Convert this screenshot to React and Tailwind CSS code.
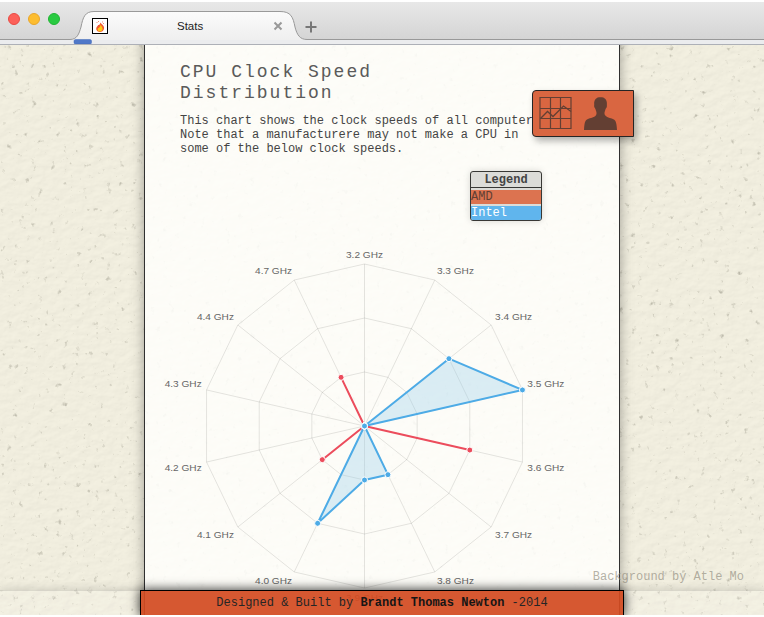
import React from "react";

const LABELS = ["3.2", "3.3", "3.4", "3.5", "3.6", "3.7", "3.8", "3.9", "4.0", "4.1", "4.2", "4.3", "4.4", "4.7"];
const AMD = [0, 0, 0, 0, 2, 0, 0, 0, 0, 1, 0, 0, 0, 1];
const INTEL = [0, 0, 2, 3, 0, 0, 1, 1, 2, 0, 0, 0, 0, 0];
const CX = 219.5;
const CY = 191;
const STEP = 54;

function point(index, radius) {
  const a = (index * 2 * Math.PI) / LABELS.length;
  return [CX + Math.sin(a) * radius, CY - Math.cos(a) * radius];
}

function outline(values) {
  return values.map((v, i) => point(i, v * STEP).join(",")).join(" ");
}

function Series({ values, stroke, fill }) {
  return (
    <g>
      <polygon points={outline(values)} fill={fill} stroke={stroke} strokeWidth="2" strokeLinejoin="round" />
      {values.map((v, i) => {
        const [x, y] = point(i, v * STEP);
        return <circle key={i} cx={x} cy={y} r="3" fill={stroke} stroke="#fff" strokeWidth="1" />;
      })}
    </g>
  );
}

function RadarChart() {
  return (
    <svg width="474" height="382" className="block shrink-0">
      <g fill="none" stroke="#000" strokeOpacity="0.1">
        {[1, 2, 3].map((n) => (
          <polygon key={n} points={outline(LABELS.map(() => n))} />
        ))}
        {LABELS.map((l, i) => {
          const [x, y] = point(i, STEP * 3);
          return <line key={l} x1={CX} y1={CY} x2={x} y2={y} />;
        })}
      </g>
      <Series values={AMD} stroke="#ec4c5c" fill="none" />
      <Series values={INTEL} stroke="#4dabe6" fill="rgba(151,205,235,0.35)" />
      <g fontFamily="Liberation Sans, sans-serif" fontSize="9.7" fill="#666">
        {LABELS.map((l, i) => {
          const [x, y] = point(i, STEP * 3 + 5);
          const center = i === 0 || i === 7;
          const anchor = center ? "middle" : i < 7 ? "start" : "end";
          const dy = i === 0 ? -1.5 : i === 7 ? 8 : i > 3.5 && i < 10.5 ? 7.5 : -1.5;
          return (
            <text key={l} x={x} y={y + dy} textAnchor={anchor} textLength="37" lengthAdjust="spacingAndGlyphs">
              {l} GHz
            </text>
          );
        })}
      </g>
    </svg>
  );
}

function Paper() {
  return (
    <svg className="absolute inset-0 h-full w-full" aria-hidden="true">
      <filter id="grain" x="0" y="0" width="100%" height="100%" colorInterpolationFilters="sRGB">
        <feTurbulence type="fractalNoise" baseFrequency="0.09 0.13" numOctaves="4" seed="7" result="n" />
        <feDiffuseLighting in="n" surfaceScale="0.8" diffuseConstant="1.13" lightingColor="#f4f1e1">
          <feDistantLight azimuth="235" elevation="60" />
        </feDiffuseLighting>
      </filter>
      <filter id="specks" x="0" y="0" width="100%" height="100%" colorInterpolationFilters="sRGB">
        <feTurbulence type="fractalNoise" baseFrequency="0.16" numOctaves="3" seed="22" />
        <feColorMatrix values="0 0 0 0 .5  0 0 0 0 .49  0 0 0 0 .43  3.5 0 0 0 -2.4" />
      </filter>
      <rect width="100%" height="100%" fill="#f1eedf" />
      <rect width="100%" height="100%" filter="url(#grain)" opacity="0.14" />
      <rect width="100%" height="100%" filter="url(#specks)" opacity="0.5" />
    </svg>
  );
}

function Flame() {
  return (
    <svg viewBox="0 0 12 12" className="h-3 w-3">
      <path d="M6.300 2.500c.8 1.500 3.200 2.500 3.700 4.500C10.500 9.800 8.600 12 6 12S1.500 9.700 2.500 7.500C2.900 6.500 3.800 6.200 4.100 5 5.100 5.300 6.300 4.300 6.300 2.500z" fill="#f25a34" />
      <path d="M6.700 4.500c.2 1.600 2.100 2.700 1.900 4.500C8.400 10.700 7.400 11.400 6 11.400 4 11.400 3.200 9.800 3.900 8.200 5 8.300 6.500 6.500 6.700 4.500z" fill="#ffc914" />
      <path d="M2.500 2h1v1h-1zM8 1.500h1v1H8zM9 3h1v1H9zM4 1h1v1H4z" fill="#f0907a" />
    </svg>
  );
}

function BrowserBar() {
  return (
    <header className="relative h-[45px] shrink-0 border-b border-[#adb0b7] bg-linear-to-b from-[#e9e9e9] to-[#d2d2d2]">
      <div className="absolute inset-x-0 top-0 h-0.5 bg-white" />
      <svg className="absolute inset-0 h-full w-full">
        <defs>
          <linearGradient id="tab" x1="0" y1="0" x2="0" y2="1">
            <stop offset="0" stopColor="#fbfbfb" />
            <stop offset="1" stopColor="#ededed" />
          </linearGradient>
        </defs>
        <path d="M0 39.5H70C77 39.5 79 34 81 27C83 17 85 11.500 94 11.500H280C291 11.500 293 17 295 27C297 35 300 39.500 307 39.500H764V44H0Z" fill="url(#tab)" />
        <rect y="40" width="764" height="4" fill="#ebecee" />
        <path d="M0 39.5H70C77 39.5 79 34 81 27C83 17 85 11.500 94 11.500H280C291 11.500 293 17 295 27C297 35 300 39.500 307 39.500H764" fill="none" stroke="#999" />
        <path d="M274.500 22.500l7 7M281.500 22.500l-7 7" stroke="#999" strokeWidth="2" />
        <path d="M305.500 27h11M311 21.500v11" stroke="#777" strokeWidth="2" />
        <rect x="74" y="39.500" width="17.500" height="4.500" rx="1.500" fill="#5078c8" stroke="#4168b6" strokeWidth=".5" />
      </svg>
      <div className="relative flex h-10 items-center">
        <div className="mb-0.5 ml-2 flex gap-2">
          <span className="h-3 w-3 rounded-full border border-[#e94a43] bg-[#fc6059]" />
          <span className="h-3 w-3 rounded-full border border-[#e9a62a] bg-[#fdbd30]" />
          <span className="h-3 w-3 rounded-full border border-[#20b533] bg-[#29ca41]" />
        </div>
        <div className="mt-3 ml-8 flex h-4 w-4 items-center justify-center border border-black bg-white">
          <Flame />
        </div>
        <span className="mt-3 ml-[69px] font-['Liberation_Sans',sans-serif] text-[11.5px] leading-3 text-[#222]">Stats</span>
      </div>
    </header>
  );
}

function Menu() {
  return (
    <nav className="absolute top-[45px] left-[532px] z-10 flex h-[47px] w-[102px] rounded-l-[4px] border border-[#252525] bg-[#d96641] shadow-[3px_4px_7px_rgba(0,0,0,0.3)]">
      <svg width="100" height="45" fill="none">
        <path d="M7 6.500h31v31H7zM17.500 6.500v31M27.500 6.500v31M7 17.500h31M7 27.500h31" stroke="#633f33" strokeWidth="1.200" />
        <path d="M7.500 27.500l7-7 5.500 5 10.500-10.500 7.500 5.500" stroke="#633f33" strokeWidth="1.300" />
        <path d="M67.500 6c-4.200 0-6.600 3.200-6.300 7 .1 1-.3 2 .2 3.300.3 1 .9 1 1.100 2 .3 1.500 1.200 2.600 1 4.500-.3 3-4.500 4-8 5-3 1-4 2.500-4.500 11.200h33c-.4-8.500-1.600-10.200-4.700-11.200-3.400-1-7.500-2.200-7.800-5-.2-1.800.7-3 1-4.500.2-1 .9-1 1.200-2 .4-1.300.1-2.300.2-3.300.3-3.800-2.200-7-6.400-7z" fill="#633f33" />
      </svg>
    </nav>
  );
}

export default function App() {
  return (
    <div className="h-[617px] w-[764px] overflow-hidden bg-white font-['Liberation_Mono',monospace] text-xs leading-[14px] text-[#444]">
      <div className="flex h-[615px] flex-col">
        <BrowserBar />
        <div className="relative h-[570px] overflow-hidden">
          <Paper />
          <main className="relative -mt-[21px] ml-[144px] flex h-[610px] w-[476px] flex-col border border-[#303030] bg-[#fffffc]/85 pt-5 shadow-[0_0_12px_rgba(0,0,0,0.35)]">
            <h1 className="mt-[17px] ml-[35px] w-60 text-lg leading-[21px] tracking-[2px] text-[#5a5a5a]">CPU Clock Speed Distribution</h1>
            <p className="mt-2.5 ml-[35px] whitespace-nowrap">
              This chart shows the clock speeds of all computers.
              <br />
              Note that a manufacturere may not make a CPU in
              <br />
              some of the below clock speeds.
            </p>
            <div className="mt-[15px] ml-[325px] h-[50px] w-[72px] shrink-0 overflow-hidden rounded-[3px] border border-[#383835] bg-[#dcdcd8] shadow-[0_0_7px_rgba(0,0,0,0.15)]">
              <div className="h-4 border-b border-[#383835] text-center leading-4 font-bold">Legend</div>
              <div className="mt-0.5 h-3.5 bg-[#dc7350] leading-[14px] text-[#633f33]">AMD</div>
              <div className="mt-0.5 h-3.5 bg-[#60b5ed] leading-[14px] text-white">Intel</div>
            </div>
            <div className="mt-3.5">
              <RadarChart />
            </div>
          </main>
          <Menu />
          <div className="absolute top-[525px] right-5 text-[#8c8779]/65">Background by Atle Mo</div>
          <div className="absolute inset-x-0 bottom-0 h-[25px] border-t border-black/10 bg-white/10 shadow-[0_-1px_10px_rgba(0,0,0,0.15)]" />
          <footer className="absolute bottom-0 left-[140px] h-[25px] w-[484px] border border-b-0 border-black bg-[#d24a20]/92 text-center leading-6 text-[#252525] shadow-[0_0_12px_rgba(0,0,0,0.75)]">
            Designed &amp; Built by <b className="text-[#151515]">Brandt Thomas Newton</b> -2014
          </footer>
        </div>
      </div>
    </div>
  );
}
